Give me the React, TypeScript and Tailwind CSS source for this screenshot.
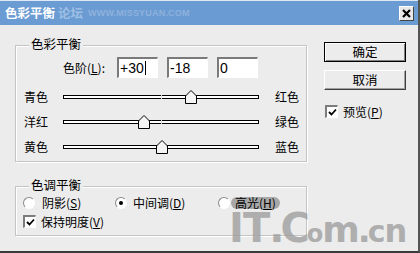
import React from "react";

const font = { fontFamily: '"Noto Sans CJK SC", "Liberation Sans", sans-serif' };

function U({ c }: { c: string }) {
  return <span className="underline underline-offset-[1px]">{c}</span>;
}

function Check() {
  return (
    <span className="flex h-[13px] w-[13px] shrink-0 items-center justify-center border-l-[2px] border-t-[2px] border-b border-r border-l-[#7c7c7c] border-t-[#7c7c7c] border-b-white border-r-white bg-white">
      <svg width="9" height="9" viewBox="0 0 9 9">
        <path d="M1 4 L3.5 6.5 L8 1.5" stroke="#000" strokeWidth="1.8" fill="none" />
      </svg>
    </span>
  );
}

function Radio({ on }: { on?: boolean }) {
  return (
    <span className="flex h-[12px] w-[12px] shrink-0 items-center justify-center rounded-full border border-l-[#8a8a8a] border-t-[#8a8a8a] border-b-white border-r-white bg-white">
      {on && <span className="h-[4px] w-[4px] rounded-full bg-black" />}
    </span>
  );
}

function Thumb({ left }: { left: number }) {
  return (
    <svg
      className="absolute top-[-6px]"
      style={{ left: left - 6 }}
      width="12"
      height="14"
      viewBox="0 0 12 14"
    >
      <polygon points="6,0.5 11.5,6 11.5,13.5 0.5,13.5 0.5,6" fill="#f4f4f4" stroke="#000" strokeWidth="1" />
    </svg>
  );
}

function SliderRow({ l, r, v }: { l: string; r: string; v: number }) {
  const pos = 98 + (v / 100) * 98;
  return (
    <div className="flex h-[25px] items-center">
      <span className="ml-[8px] w-[39px]">{l}</span>
      <div className="relative h-[4px] w-[196px] border border-black bg-white">
        <span className="absolute left-[97px] top-[-1px] h-[4px] w-[1px] bg-[#ddd]" />
        <Thumb left={pos} />
      </div>
      <span className="ml-[16px]">{r}</span>
    </div>
  );
}

function Input({ v, caret }: { v: string; caret?: boolean }) {
  return (
    <div
      className="flex h-[21px] w-[41px] items-center border-l-[2px] border-t-[2px] border-b border-r border-l-[#7a7a7a] border-t-[#7a7a7a] border-b-white border-r-white bg-white pl-[1px] text-[14px] leading-none"
      style={{ fontFamily: '"Liberation Sans", sans-serif' }}
    >
      {v}
      {caret && <span className="ml-[1px] h-[14px] w-[1px] bg-black" />}
    </div>
  );
}

export default function App() {
  return (
    <div
      className="relative flex h-[253px] w-[420px] flex-col overflow-hidden border-b-[2px] border-r-[2px] border-b-[#3a3a3a] border-r-[#555] bg-[#ececec] text-[12px] leading-none text-black"
      style={font}
    >
      <div className="flex h-[25px] shrink-0 items-center border-t border-t-[#dfe9f5] bg-[#6a9bd3] pl-[5px] pr-[4px]">
        <span className="text-[12.5px] font-bold text-white">色彩平衡</span>
        <span className="ml-[3px] text-[12.5px] font-bold text-[#9dbfe4]">论坛</span>
        <span
          className="ml-[5px] text-[9px] font-bold tracking-[0.2px] text-[#8fb2dc]"
          style={{ fontFamily: '"Liberation Sans", sans-serif' }}
        >
          WWW.MISSYUAN.COM
        </span>
        <div className="ml-auto flex h-[15px] w-[15px] items-center justify-center border border-l-white border-t-white border-b-[#444] border-r-[#444] bg-[#e8e8e8]">
          <svg width="9" height="9" viewBox="0 0 9 9">
            <path d="M1 1 L8 8 M8 1 L1 8" stroke="#000" strokeWidth="2.2" />
          </svg>
        </div>
      </div>

      <div className="flex flex-1">
        <div className="ml-[15px] flex w-[292px] flex-col pt-[20px]">
          <div className="relative h-[117px] border border-[#c4c4c4] shadow-[inset_1px_1px_0_#fff,1px_1px_0_#fff]">
            <span className="absolute left-[13px] top-[-8px] bg-[#ececec] px-[2px] text-[12.5px]">色彩平衡</span>
            <div className="flex items-center pt-[11px]">
              <span className="ml-[47px] w-[54px]">
                色阶(<U c="L" />):
              </span>
              <div className="flex gap-[9px]">
                <Input v="+30" caret />
                <Input v="-18" />
                <Input v="0" />
              </div>
            </div>
            <div className="mt-[6px] flex flex-col">
              <SliderRow l="青色" r="红色" v={30} />
              <SliderRow l="洋红" r="绿色" v={-18} />
              <SliderRow l="黄色" r="蓝色" v={0} />
            </div>
          </div>

          <div className="relative mt-[24px] h-[50px] border border-[#c4c4c4] shadow-[inset_1px_1px_0_#fff,1px_1px_0_#fff]">
            <span className="absolute left-[13px] top-[-8px] bg-[#ececec] px-[2px] text-[12.5px]">色调平衡</span>
            <div className="flex items-center pl-[7px] pt-[10px]">
              <div className="flex w-[92px] items-center gap-[7px]">
                <Radio />
                <span>
                  阴影(<U c="S" />)
                </span>
              </div>
              <div className="flex w-[103px] items-center gap-[6px]">
                <Radio on />
                <span>
                  中间调(<U c="D" />)
                </span>
              </div>
              <div className="flex items-center gap-[5px]">
                <Radio />
                <span className="relative z-10">
                  高光(<U c="H" />)
                </span>
              </div>
            </div>
            <div className="mt-[6px] flex items-center gap-[5px] pl-[7px]">
              <Check />
              <span>
                保持明度(<U c="V" />)
              </span>
            </div>
          </div>
        </div>

        <div className="ml-[17px] flex w-[82px] flex-col pt-[17px]">
          <div className="flex h-[20px] items-center justify-center border border-black shadow-[inset_1px_1px_0_#fff,inset_-1px_-1px_0_#808080] bg-[#ececec] text-[12.5px]">
            确定
          </div>
          <div className="mt-[8px] flex h-[20px] items-center justify-center border border-l-white border-t-white border-b-[#404040] border-r-[#404040] shadow-[inset_-1px_-1px_0_#a0a0a0] bg-[#ececec] text-[12.5px]">
            取消
          </div>
          <div className="mt-[15px] flex items-center gap-[5px] pl-[1px]">
            <Check />
            <span>
              预览(<U c="P" />)
            </span>
          </div>
        </div>
      </div>

      <span className="pointer-events-none absolute left-[231px] top-[197px] h-[12px] w-[49px] rounded-full bg-[#7a7a7a] opacity-60" />
      <div
        className="pointer-events-none absolute bottom-[6px] left-[229px] flex items-baseline font-bold leading-[0.8] text-[#9a9a9a] opacity-75"
        style={{ fontFamily: '"DejaVu Sans", sans-serif' }}
      >
        <span className="text-[40px] tracking-[-1px]">IT</span>
        <span className="text-[40px] tracking-[-4px]">.</span>
        <span className="text-[40px] tracking-[-3px]">C</span>
        <span className="text-[24px] tracking-[-1px]">o</span>
        <span className="text-[36px] tracking-[-2px]">m</span>
        <span className="text-[34px] tracking-[-3px]">.</span>
        <span className="text-[30px] tracking-[-1px]">c</span>
        <span className="text-[32px]">n</span>
      </div>
    </div>
  );
}
